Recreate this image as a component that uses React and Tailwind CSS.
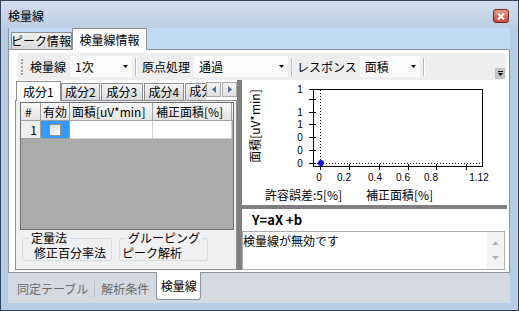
import React from "react";

const jp = "font-['Noto_Sans_CJK_JP','Noto_Sans',sans-serif]";

const Arrow = () => (
  <svg width="5" height="3" viewBox="0 0 5 3">
    <path d="M0 0H5L2.5 3Z" fill="#000" />
  </svg>
);

const Sep = () => <div className="w-[2px] h-[18px] border-l border-[#bdbdbd] bg-white" />;

const Combo = ({ text, className }) => (
  <div className={`h-[21px] bg-[#fbfbfb] flex items-center justify-between pl-[5px] pr-[4px] ${className}`}>
    <span>{text}</span>
    <Arrow />
  </div>
);

function Toolbar() {
  return (
    <div className="h-[27px] ml-[2px] mr-[1px] flex items-center bg-[#eeeeee] rounded-r-[5px] whitespace-nowrap">
      <div className="ml-[4px] w-0 h-[16px] border-l-[2px] border-dotted border-[#a3a3a3]" />
      <span className="ml-[7px]">検量線</span>
      <Combo text="1次" className="ml-[4px] w-[62px]" />
      <div className="ml-[3px]"><Sep /></div>
      <span className="ml-[5px]">原点処理</span>
      <Combo text="通過" className="ml-[4px] w-[94px]" />
      <div className="ml-[3px]"><Sep /></div>
      <span className="ml-[4px]">レスポンス</span>
      <Combo text="面積" className="ml-[3px] w-[60px]" />
      <div className="ml-[3px]"><Sep /></div>
      <div className="flex-1" />
      <div className="self-end mb-[1px] mr-[1px] w-[10px] h-[11px] bg-[#c4c4c4] flex flex-col items-center justify-center gap-[1px]">
        <div className="w-[5px] h-px bg-black" />
        <Arrow />
      </div>
    </div>
  );
}

const SmallTab = ({ children, className = "" }) => (
  <div className={`h-[17px] border border-b-0 border-[#8e8f8f] bg-gradient-to-b from-[#f3f3f3] to-[#dadada] flex items-center justify-center whitespace-nowrap ${className}`}>
    {children}
  </div>
);

function ScrollBtn({ dir }) {
  return (
    <div className="w-[15px] h-[15px] border border-[#a9a9a9] bg-gradient-to-b from-[#f4f4f4] to-[#e0e0e0] flex items-center justify-center">
      <svg width="4" height="7" viewBox="0 0 4 7">
        {dir === "l" ? <path d="M4 0V7L0 3.5Z" fill="#4d6fa3" /> : <path d="M0 0V7L4 3.5Z" fill="#4d6fa3" />}
      </svg>
    </div>
  );
}

function Grid() {
  return (
    <div className="mt-px ml-[4px] w-[214px] h-[128px] border border-[#6e6e6e] bg-[#ababab] whitespace-nowrap">
      <div className="flex h-[18px] bg-gradient-to-b from-[#f8f8f8] to-[#e6e6e6] border-b border-[#a0a0a0]">
        <div className="w-[20px] border-r border-[#a0a0a0] pl-[4px] flex items-center">#</div>
        <div className="w-[29px] border-r border-[#a0a0a0] flex items-center justify-center">有効</div>
        <div className="w-[83px] border-r border-[#a0a0a0] pl-[2px] flex items-center">面積[uV*min]</div>
        <div className="w-[79px] border-r border-[#a0a0a0] pl-[3px] flex items-center">補正面積[%]</div>
      </div>
      <div className="flex h-[18px]">
        <div className="w-[20px] bg-[#efefef] border-r border-b border-[#a0a0a0] flex items-center justify-end pr-[3px]">1</div>
        <div className="w-[29px] bg-[#3399ff] border-r border-b border-[#a0a0a0] flex items-center justify-center">
          <div className="w-[12px] h-[12px] border border-[#8e8f8f] bg-gradient-to-br from-[#dcdcdc] to-[#fbfbfb]" />
        </div>
        <div className="w-[83px] bg-white border-r border-b border-[#d4d4d4]" />
        <div className="w-[79px] bg-white border-r border-b border-[#d4d4d4]" />
      </div>
    </div>
  );
}

const Group = ({ title, value, className }) => (
  <fieldset className={`border border-[#d3dde4] rounded-[3px] whitespace-nowrap ${className}`}>
    <legend className="ml-[6px] px-[2px] leading-[12px]">{title}</legend>
    <div className="leading-[12px] pt-[3px] pb-[1px]">{value}</div>
  </fieldset>
);

function LeftPanel() {
  return (
    <div className="w-[222px] flex flex-col bg-white">
      <div className="h-[20px] flex items-end pl-px">
        <div className="w-[45px] h-[20px] -mb-px z-10 relative border border-b-0 border-[#8e8f8f] bg-white flex items-center justify-center">成分1</div>
        <SmallTab className="w-[40px]">成分2</SmallTab>
        <SmallTab className="w-[42px] ml-px">成分3</SmallTab>
        <SmallTab className="w-[41px] ml-px">成分4</SmallTab>
        <div className="w-[21px] h-[17px] ml-px overflow-hidden border border-b-0 border-r-0 border-[#8e8f8f] bg-gradient-to-b from-[#f3f3f3] to-[#dadada] pl-[3px] whitespace-nowrap">成分5</div>
        <div className="self-start mt-[2px] flex gap-px">
          <ScrollBtn dir="l" />
          <ScrollBtn dir="r" />
        </div>
      </div>
      <div className="flex-1 border border-[#898c95] bg-[#f0f0f0] flex flex-col">
        <Grid />
        <div className="mt-[2px] pl-[6px] flex gap-[7px]">
          <Group title="定量法" value={<span className="pl-[11px]">修正百分率法</span>} className="w-[90px]" />
          <Group title="グルーピング" value={<span className="pl-[2px]">ピーク解析</span>} className="w-[89px]" />
        </div>
      </div>
    </div>
  );
}

function Chart() {
  const yTicks = [
    [9, "1"],
    [32, "1"],
    [44, "1"],
    [57, "0"],
    [70, "0"],
    [83, "0"],
  ];
  const xTicks = [78, 107, 137, 166, 194, 224];
  const xLabels = [
    [77, "0"],
    [102, "0.2"],
    [133, "0.4"],
    [161, "0.6"],
    [189, "0.8"],
    [237, "1.12"],
  ];
  const f = "'Noto Sans CJK JP','Noto Sans',sans-serif";
  const n = "'Liberation Sans',sans-serif";
  return (
    <svg width="261" height="125" viewBox="0 0 261 125">
      <rect x="71.5" y="9.5" width="169" height="77" fill="none" stroke="#000" />
      <line x1="78.5" y1="10" x2="78.5" y2="86" stroke="#000" strokeDasharray="1 2" />
      <line x1="72" y1="83.5" x2="240" y2="83.5" stroke="#000" strokeDasharray="1 2" />
      {yTicks.map(([y]) => (
        <line key={y} x1="67" y1={y + 0.5} x2="74" y2={y + 0.5} stroke="#000" />
      ))}
      <line x1="67" y1="19.5" x2="74" y2="19.5" stroke="#000" />
      {xTicks.map((x) => (
        <line key={x} x1={x + 0.5} y1="84" x2={x + 0.5} y2="90" stroke="#000" />
      ))}
      {yTicks.map(([y, l]) => (
        <text key={"l" + y} x="58" y={y + 4} fontSize="10" textAnchor="middle" fontFamily={n}>{l}</text>
      ))}
      {xLabels.map(([x, l]) => (
        <text key={"x" + x} x={x} y="101" fontSize="10" textAnchor="middle" fontFamily={n}>{l}</text>
      ))}
      <circle cx="79" cy="83" r="3" fill="#1010e0" />
      <text x="15" y="46" fontSize="12" textAnchor="middle" fontFamily={f} transform="rotate(-90 15 46)" dominantBaseline="middle">面積[uV*min]</text>
      <text x="23" y="120" fontSize="12" fontFamily={f}>許容誤差:5[%]</text>
      <text x="124" y="120" fontSize="12" fontFamily={f}>補正面積[%]</text>
    </svg>
  );
}

function RightPanel() {
  return (
    <div className="flex-1 flex flex-col">
      <div className="h-[125px] bg-white">
        <Chart />
      </div>
      <div className="h-[4px]" />
      <div className="flex-1 bg-white flex flex-col">
        <div className="h-[22px] pl-[10px] flex items-center font-bold text-[13px]">Y=aX +b</div>
        <div className="flex-1 mr-[2px] border border-[#abadb3] flex">
          <div className="flex-1 pt-[2px] leading-[14px]">検量線が無効です</div>
          <div className="w-[17px] bg-[#f4f4f4] flex flex-col items-center justify-between py-[9px]">
            <svg width="7" height="4" viewBox="0 0 7 4"><path d="M0 4H7L3.5 0Z" fill="#b5b5b5" /></svg>
            <svg width="7" height="4" viewBox="0 0 7 4"><path d="M0 0H7L3.5 4Z" fill="#b5b5b5" /></svg>
          </div>
        </div>
      </div>
    </div>
  );
}

export default function App() {
  return (
    <div className={`w-[519px] h-[311px] border border-[#34465a] bg-[#b7cde6] flex flex-col text-[12px] leading-[14px] text-black ${jp}`}>
      <div className="h-[27px] flex items-center justify-between pl-[7px] pr-[9px] pt-[3px] bg-gradient-to-b from-[#d2deed] to-[#bccfe5]">
        <span>検量線</span>
        <div className="w-[16px] h-[14px] rounded-[3px] border border-[#6e2a22] bg-gradient-to-b from-[#e49a8c] to-[#c24a38] flex items-center justify-center">
          <svg width="8" height="7" viewBox="0 0 8 7">
            <path d="M1 0.5L7 6.5M7 0.5L1 6.5" stroke="#fff" strokeWidth="2" />
          </svg>
        </div>
      </div>
      <div className="flex-1 ml-[7px] mr-[8px] mb-[7px] flex flex-col">
        <div className="h-[21px] bg-[#c2daf6] flex items-end border-l border-[#8e9399] whitespace-nowrap">
          <div className="ml-[2px] w-[61px] h-[17px] border border-b-0 border-[#8e8f8f] bg-gradient-to-b from-[#f2f2f2] to-[#d9d9d9] flex items-center justify-center [font-feature-settings:'palt'] tracking-[0.5px]">ピーク情報</div>
          <div className="w-[75px] h-[22px] -mb-px z-10 relative border border-b-0 border-[#8e8f8f] bg-white flex items-center justify-center">検量線情報</div>
        </div>
        <div className="h-[224px] border border-[#8e9399] bg-white pl-[6px] pr-[2px] pt-[3px] pb-[2px] flex flex-col">
          <Toolbar />
          <div className="flex-1 flex bg-[#808080] gap-[5px]">
            <LeftPanel />
            <RightPanel />
          </div>
        </div>
        <div className="flex-1 bg-[#d4d9e2] flex items-start text-[#6b6b6b] pl-[9px] whitespace-nowrap">
          <div className="mt-[9px]">同定テーブル</div>
          <div className="mt-[8px] ml-[6px] w-px h-[16px] bg-[#b8bcc4]" />
          <div className="mt-[9px] ml-[6px]">解析条件</div>
          <div className="ml-[7px] -mt-px w-[45px] h-[28px] bg-white border border-t-0 border-[#8e959e] rounded-b-[3px] text-black flex items-center justify-center">検量線</div>
        </div>
      </div>
    </div>
  );
}
